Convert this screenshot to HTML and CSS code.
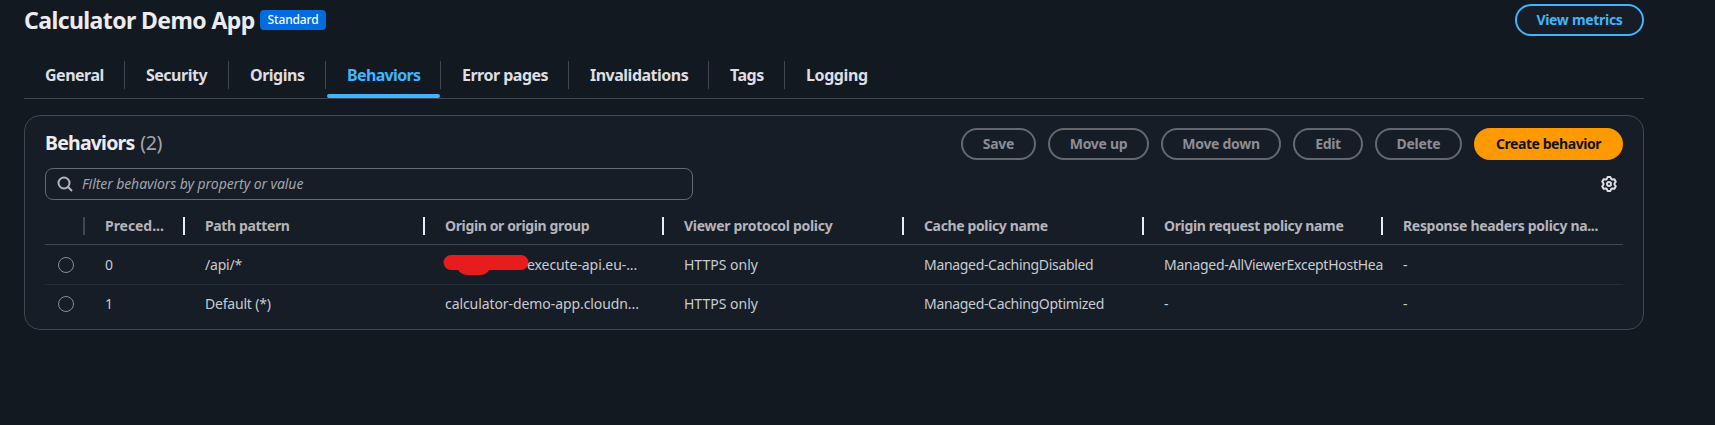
FILE: index.html
```html
<!DOCTYPE html>
<html lang="en">
<head>
<meta charset="utf-8">
<title>Calculator Demo App</title>
<link rel="stylesheet" href="styles.css">
</head>
<body>
<main class="page">
  <header class="page-header">
    <h1 class="title">Calculator Demo App</h1>
    <span class="badge">Standard</span>
    <button class="btn btn-link">View metrics</button>
  </header>
  <nav class="tabs">
    <a class="tab tab-general">General</a>
    <a class="tab tab-security">Security</a>
    <a class="tab tab-origins">Origins</a>
    <a class="tab tab-behaviors active">Behaviors</a>
    <a class="tab tab-errors">Error pages</a>
    <a class="tab tab-invalidations">Invalidations</a>
    <a class="tab tab-tags">Tags</a>
    <a class="tab tab-logging">Logging</a>
  </nav>
  <section class="panel">
    <div class="panel-header">
      <h2 class="heading">Behaviors <span class="count">(2)</span></h2>
      <div class="actions">
        <button class="btn b-save">Save</button>
        <button class="btn b-up">Move up</button>
        <button class="btn b-down">Move down</button>
        <button class="btn b-edit">Edit</button>
        <button class="btn b-delete">Delete</button>
        <button class="btn btn-primary">Create behavior</button>
      </div>
    </div>
    <div class="toolbar">
      <label class="search">
        <svg class="icon" viewBox="0 0 16 16"><circle cx="7" cy="7" r="5.500" /><path d="m15 15-4.200-4.200" /></svg>
        <span class="placeholder">Filter behaviors by property or value</span>
      </label>
      <svg class="gear" viewBox="0 0 16 16"><path d="M5.800 3 6.600 1h2.800l.8 2 1.100.6 2.100-.4 1.400 2.500L13.500 7.400v1.200l1.300 1.700-1.400 2.500-2.100-.4-1.100.6-.8 2H6.600l-.8-2-1.100-.6-2.100.4-1.400-2.500 1.300-1.700V7.400L1.200 5.700l1.400-2.500 2.100.4z"/><circle cx="8" cy="8" r="2"/></svg>
    </div>
    <div class="table">
      <div class="row head">
        <div class="cell"></div>
        <div class="cell precedence">Preced...</div>
        <div class="cell">Path pattern</div>
        <div class="cell">Origin or origin group</div>
        <div class="cell viewer">Viewer protocol policy</div>
        <div class="cell">Cache policy name</div>
        <div class="cell">Origin request policy name</div>
        <div class="cell response">Response headers policy na...</div>
      </div>
      <div class="row first">
        <div class="cell"><span class="radio"></span></div>
        <div class="cell">0</div>
        <div class="cell">/api/*</div>
        <div class="cell origin"><svg class="redaction" viewBox="0 0 86 20"><path d="M8 0H78a7.500 7.500 0 0 1 0 15H46Q44 20 36 20H26Q18 20 15 15H8A7.500 7.500 0 0 1 8 0Z"/></svg>execute-api.eu-...</div>
        <div class="cell protocol">HTTPS only</div>
        <div class="cell policy">Managed-CachingDisabled</div>
        <div class="cell policy clip">Managed-AllViewerExceptHostHea</div>
        <div class="cell">-</div>
      </div>
      <div class="row last">
        <div class="cell"><span class="radio"></span></div>
        <div class="cell">1</div>
        <div class="cell">Default (*)</div>
        <div class="cell origin">calculator-demo-app.cloudn...</div>
        <div class="cell protocol">HTTPS only</div>
        <div class="cell policy">Managed-CachingOptimized</div>
        <div class="cell">-</div>
        <div class="cell">-</div>
      </div>
    </div>
  </section>
</main>
</body>
</html>
```
FILE: styles.css
```css
* { box-sizing: border-box; }
body {
  margin: 0;
  height: 425px;
  overflow: hidden;
  background: #131920;
  color: #c9cbd2;
  font: 14px/20px "Noto Sans", "Open Sans", sans-serif;
}
.page { width: 1620px; margin-left: 24px; padding-top: 4px; white-space: nowrap; }
.page-header { display: flex; align-items: center; height: 32px; }
.title { margin: 0; width: 236px; font-size: 23px; line-height: 30px; color: #ebebf0; letter-spacing: -0.58px; }
.badge { width: 66px; height: 20px; border-radius: 4px; background: #006ce0; color: #f9f9fa; font-size: 12px; font-weight: 500; letter-spacing: -0.15px; text-align: center; line-height: 20px; }
.btn {
  height: 32px; padding: 0; border: 2px solid #656871; border-radius: 16px; background: #161d26;
  color: #8c8c94; font: 700 14px/20px "Noto Sans", sans-serif; letter-spacing: -0.3px; white-space: nowrap;
}
.btn-link { width: 129px; margin-left: auto; border-color: #42b4ff; color: #42b4ff; }
.btn-primary { width: 149px; border-color: #ff9900; background: #ff9900; color: #0f141a; letter-spacing: -0.43px; }
.b-save { width: 75px; } .b-up { width: 101px; } .b-down { width: 120px; } .b-edit { width: 70px; } .b-delete { width: 87px; }

.tabs { display: flex; height: 63px; padding-top: 25px; border-bottom: 1px solid #424650; color: #dedee3; font-size: 16px; font-weight: 700; }
.tab { position: relative; height: 28px; padding-left: 21px; border-right: 1px solid #424650; line-height: 28px; letter-spacing: -0.5px; }
.tab-general { width: 101px; } .tab-security { width: 104px; } .tab-origins { width: 97px; }
.tab-behaviors { width: 115px; letter-spacing: -0.65px; }
.tab-errors { width: 128px; } .tab-invalidations { width: 140px; } .tab-tags { width: 76px; }
.tab-logging { border: 0; letter-spacing: -0.4px; }
.active { color: #42b4ff; }
.active::after { content: ""; position: absolute; left: 1px; right: 0; bottom: -9px; height: 4px; border-radius: 2px; background: #42b4ff; }

.panel { height: 215px; margin-top: 16px; padding: 12px 20px 0; border: 1px solid #424650; border-radius: 16px; background: #161d26; }
.panel-header { display: flex; justify-content: space-between; height: 32px; }
.heading { margin: 0; color: #ebebf0; font-size: 19.500px; line-height: 30px; letter-spacing: -0.8px; word-spacing: 1.500px; }
.count { color: #a4a4ad; font-weight: 400; letter-spacing: -0.3px; }
.actions { display: flex; gap: 12px; }
.toolbar { display: flex; align-items: center; justify-content: space-between; margin-top: 8px; padding-right: 6px; }
.search { display: flex; align-items: center; gap: 9px; width: 648px; height: 32px; padding-left: 11px; border: 1px solid #656871; border-radius: 8px; }
.icon, .gear { width: 16px; height: 16px; fill: none; stroke: #b4b4bb; stroke-width: 2; }
.gear { stroke: #dedee3; stroke-linejoin: round; }
.placeholder { color: #a4a4ad; font-style: italic; letter-spacing: -0.08px; }

.table { margin-top: 8px; }
.row { display: grid; grid-template-columns: 40px 100px 240px 239px 240px 240px 239px 240px; align-items: center; }
.row > :first-child { padding-left: 13px; }
.head { height: 37px; border-bottom: 1px solid #424650; color: #b4b4bb; font-weight: 700; }
.first { height: 40px; border-bottom: 1px solid #232b37; }
.last { height: 38px; }
.cell { display: flex; align-items: center; padding-left: 20px; letter-spacing: -0.2px; }
.head .cell { height: 18px; border-right: 2px solid #ebebf0; letter-spacing: -0.37px; }
.head .cell:first-child { border-color: #424650; }
.head .cell:last-child { border: 0; }
.head .precedence { letter-spacing: -0.05px; }
.head .viewer { letter-spacing: -0.3px; }
.head .response { letter-spacing: -0.32px; }
.radio { width: 16px; height: 16px; border: 1px solid #8c8c94; border-radius: 50%; }
.origin { letter-spacing: -0.08px; }
.protocol { letter-spacing: 0; }
.policy { letter-spacing: -0.32px; }
.redaction { width: 86px; height: 20px; margin: 1px -2px 0 -2px; fill: #e71d1d; flex: none; }
.clip { overflow: hidden; letter-spacing: -0.27px; }
```
